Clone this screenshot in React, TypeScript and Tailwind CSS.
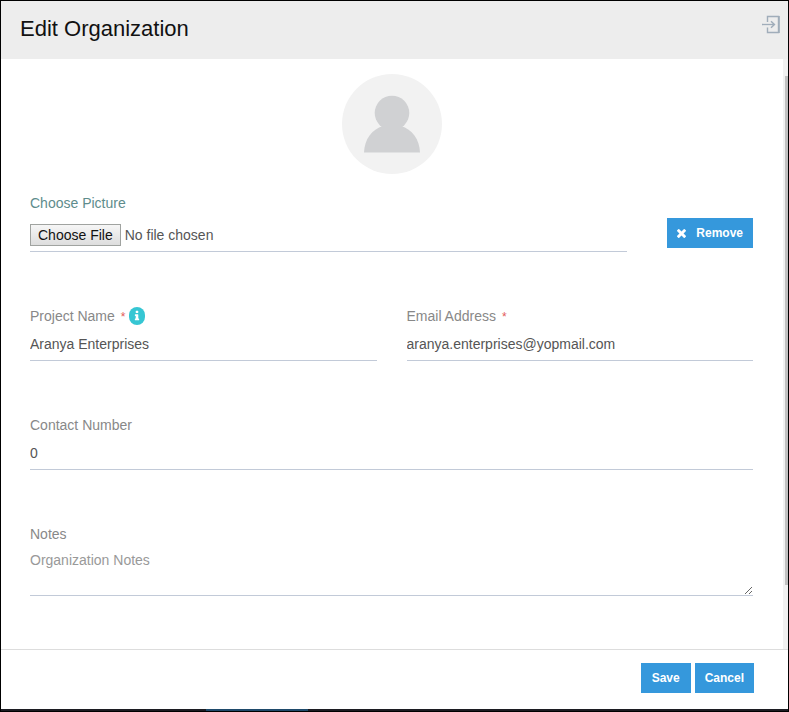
import React, { useState } from "react";

const inputClass =
  "block h-[35px] w-full border-b border-[#c2cad8] bg-transparent pt-0.5 text-sm text-[#555555] outline-none";
const buttonClass =
  "flex h-[30px] min-w-[50px] items-center justify-center bg-[#3598dc] px-2.5 text-xs font-bold text-white hover:bg-[#217ebd]";

function Required() {
  return <span className="ml-1.5 text-xs text-[#e35b5a]">*</span>;
}

function ExitIcon() {
  return (
    <svg viewBox="0 0 20 20" className="size-5" fill="none" stroke="#a0adba" aria-hidden="true">
      <path d="M6.500 7V1.500h11v16h-11V12.500" strokeWidth="1.4" />
      <path d="M18 1v17" strokeWidth="1.6" />
      <path d="M1 9.500h12" strokeWidth="1.3" />
      <path d="M10 6.300l3.400 3.200L10 12.700" strokeWidth="1.500" />
    </svg>
  );
}

function Avatar() {
  return (
    <svg viewBox="0 0 100 100" className="size-[100px]" role="img" aria-label="Organization picture">
      <circle cx="50" cy="50" r="50" fill="#f2f2f2" />
      <circle cx="50" cy="39" r="17.3" fill="#d0d1d3" />
      <path d="M22 78.500C22.500 65 30 55.500 41 52h18C70 55.500 77.500 65 78 78.500z" fill="#d0d1d3" />
    </svg>
  );
}

function InfoIcon() {
  return (
    <svg viewBox="0 0 1792 1792" className="size-3" fill="currentColor" aria-hidden="true">
      <path d="M1216 1344v128q0 26-19 45t-45 19h-512q-26 0-45-19t-19-45v-128q0-26 19-45t45-19h64v-384h-64q-26 0-45-19t-19-45v-128q0-26 19-45t45-19h384q26 0 45 19t19 45v576h64q26 0 45 19t19 45zm-128-1152v192q0 26-19 45t-45 19h-256q-26 0-45-19t-19-45v-192q0-26 19-45t45-19h256q26 0 45 19t19 45z" />
    </svg>
  );
}

function TimesIcon() {
  return (
    <svg viewBox="302 366 1188 1188" className="size-[9px]" fill="currentColor" aria-hidden="true">
      <path d="M1490 1322q0 40-28 68l-136 136q-28 28-68 28t-68-28l-294-294-294 294q-28 28-68 28t-68-28l-136-136q-28-28-28-68t28-68l294-294-294-294q-28-28-28-68t28-68l136-136q28-28 68-28t68 28l294 294 294-294q28-28 68-28t68 28l136 136q28 28 28 68t-28 68l-294 294 294 294q28 28 28 68z" />
    </svg>
  );
}

export default function App() {
  const [name, setName] = useState("Aranya Enterprises");
  const [email, setEmail] = useState("aranya.enterprises@yopmail.com");
  const [phone, setPhone] = useState("0");
  const [notes, setNotes] = useState("");

  return (
    <div className="flex min-h-screen flex-col border border-black bg-white font-['Liberation_Sans',Arial,sans-serif] text-sm text-[#888888]">
      <header className="flex h-[58px] items-start justify-between bg-[#ededed] pt-3.5 pr-[7px] pl-[19px]">
        <h1 className="text-[22px] leading-7 text-[#111111]">Edit Organization</h1>
        <button type="button" aria-label="Close">
          <ExitIcon />
        </button>
      </header>

      <div className="flex flex-1">
        <form id="organization" className="min-w-0 flex-1 pt-[15px] pr-[30px] pb-[53px] pl-[29px]">
          <div className="mb-[19px] flex justify-center">
            <Avatar />
          </div>

          <div className="flex flex-col gap-[54px]">
            <div className="flex items-end gap-10">
              <div className="flex-1">
                <label htmlFor="picture" className="block h-5 leading-5 text-[#5e8c8c]">
                  Choose Picture
                </label>
                <div className="flex h-[39px] items-center border-b border-[#c2cad8] pt-1.5">
                  <input
                    id="picture"
                    type="file"
                    className="h-[22px] w-full text-sm text-[#555555] file:h-[22px] file:border file:border-solid file:border-[#a0a3a0] file:bg-linear-to-b file:from-[#f6f6f6] file:to-[#dddddd] file:px-[7px] file:text-sm file:text-[#111111]"
                  />
                </div>
              </div>
              <button type="button" className={buttonClass + " mb-1 gap-2.5"}>
                <TimesIcon />
                Remove
              </button>
            </div>

            <div className="grid grid-cols-2 gap-[30px]">
              <div>
                <div className="flex h-5 items-center gap-1 leading-5">
                  <label htmlFor="name">
                    Project Name
                    <Required />
                  </label>
                  <button
                    type="button"
                    aria-label="About the project name"
                    className="flex h-[18px] w-4 items-center justify-center rounded-full bg-[#36c6d3] text-white"
                  >
                    <InfoIcon />
                  </button>
                </div>
                <input id="name" type="text" className={inputClass} value={name} onChange={(e) => setName(e.target.value)} />
              </div>
              <div>
                <label htmlFor="email" className="block h-5 leading-5">
                  Email Address
                  <Required />
                </label>
                <input id="email" type="email" className={inputClass} value={email} onChange={(e) => setEmail(e.target.value)} />
              </div>
            </div>

            <div>
              <label htmlFor="phone" className="block h-5 leading-5">
                Contact Number
              </label>
              <input id="phone" type="tel" className={inputClass} value={phone} onChange={(e) => setPhone(e.target.value)} />
            </div>

            <div>
              <label htmlFor="notes" className="block h-5 leading-5">
                Notes
              </label>
              <textarea
                id="notes"
                placeholder="Organization Notes"
                className="block h-[52px] w-full resize-y border-b border-[#c2cad8] bg-transparent pt-1.5 text-sm leading-5 text-[#555555] outline-none placeholder:text-[#999999]"
                value={notes}
                onChange={(e) => setNotes(e.target.value)}
              />
            </div>
          </div>
        </form>

        <div className="flex w-[5px] flex-col bg-[#f1f1f1] pt-[17px] pb-16 pl-0.5" aria-hidden="true">
          <div className="flex-1 bg-[#c1c1c1]" />
        </div>
      </div>

      <footer className="flex justify-end gap-1 border-t border-[#dddddd] pt-[13px] pr-[34px] pb-4">
        <button type="submit" form="organization" className={buttonClass}>
          Save
        </button>
        <button type="button" className={buttonClass}>
          Cancel
        </button>
      </footer>

      <div className="flex h-0.5 bg-[#1c1c22]" aria-hidden="true">
        <div className="w-[26%]" />
        <div className="w-[13%] bg-[#1f4a6b]" />
      </div>
    </div>
  );
}
